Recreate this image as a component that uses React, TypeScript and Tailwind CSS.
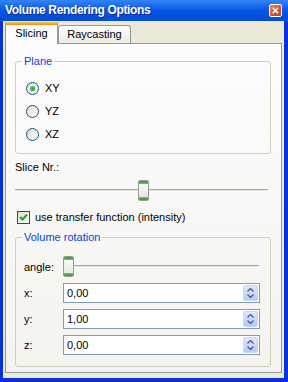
import React from "react";

function Thumb() {
  return (
    <div className="w-[11px] h-[21px] rounded-[2px] border border-[#9c9b95] bg-gradient-to-b from-[#ffffff] to-[#e2e1da] flex flex-col justify-between overflow-hidden">
      <div className="h-[3px] bg-gradient-to-b from-[#1f9e1f] to-[#5dd05d]" />
      <div className="h-[3px] bg-gradient-to-b from-[#5dd05d] to-[#1f9e1f]" />
    </div>
  );
}

function Slider({ pos, className }: { pos: number; className?: string }) {
  return (
    <div className={"relative h-[21px] flex items-center " + (className ?? "")}>
      <div className="w-full h-[3px] border-t border-[#a9a8a2] border-b border-b-white bg-[#e4e3dd]" />
      <div className="absolute top-0" style={{ left: pos }}>
        <Thumb />
      </div>
    </div>
  );
}

function Radio({ checked, label }: { checked?: boolean; label: string }) {
  return (
    <div className="h-[23px] flex items-center gap-[6px]">
      <div className="w-[13px] h-[13px] rounded-full border border-[#1c5180] bg-gradient-to-br from-[#dcdcd4] to-white flex items-center justify-center">
        {checked && <div className="w-[5px] h-[5px] rounded-full bg-gradient-to-br from-[#5ad25a] to-[#1d9a1d]" />}
      </div>
      <span>{label}</span>
    </div>
  );
}

function Spin({ value }: { value: string }) {
  return (
    <div className="flex-1 h-[20px] border border-[#7f9db9] bg-white flex items-center justify-between pl-[3px] pr-[1px]">
      <span>{value}</span>
      <div className="w-[15px] h-[16px] rounded-[2px] border border-[#c8d6f8] bg-gradient-to-b from-[#dde7fe] to-[#b6c9f7] flex flex-col items-center justify-center gap-[2px]">
        <svg width="7" height="4" viewBox="0 0 7 4">
          <path d="M0.5 3.5 L3.5 0.5 L6.5 3.5" fill="none" stroke="#4d6185" strokeWidth="1.4" />
        </svg>
        <svg width="7" height="4" viewBox="0 0 7 4">
          <path d="M0.5 0.5 L3.5 3.5 L6.5 0.5" fill="none" stroke="#4d6185" strokeWidth="1.4" />
        </svg>
      </div>
    </div>
  );
}

export default function App() {
  return (
    <div className="w-[288px] h-[382px] flex flex-col bg-[#0831d9] font-['Liberation_Sans',Arial,sans-serif] text-[11px] leading-[13px] text-black">
      {/* Title bar */}
      <div className="h-[21px] shrink-0 flex items-center justify-between pl-[5px] pr-[6px] bg-gradient-to-b from-[#3484f7] via-[#0655e4] to-[#024bd6]">
        <span className="text-white font-bold text-[12px] tracking-[-0.35px] [text-shadow:1px_1px_0_#0a2a8c]">Volume Rendering Options</span>
        <div className="w-[13px] h-[13px] rounded-[2px] border border-white bg-gradient-to-br from-[#e98a6c] via-[#d8552f] to-[#c23c16] flex items-center justify-center">
          <svg width="7" height="7" viewBox="0 0 7 7">
            <path d="M0.8 0.8 L6.2 6.2 M6.2 0.8 L0.8 6.2" stroke="white" strokeWidth="1.6" />
          </svg>
        </div>
      </div>

      {/* Body */}
      <div className="flex-1 flex flex-col bg-[#ece9d8] ml-[3px] mr-[4px] mb-[4px] pt-[1px] pl-[2px] pr-[2px] pb-[5px]">
        {/* Tabs */}
        <div className="h-[21px] flex items-end">
          <div className="relative z-10 w-[53px] h-[22px] -mb-[1px] flex flex-col border-x border-[#919b9c] bg-[#fcfcfe]">
            <div className="h-[3px] -mx-[1px] rounded-t-[3px] bg-gradient-to-b from-[#ffc83c] to-[#e68b2c]" />
            <div className="flex-1 flex items-center justify-center pb-[2px]">Slicing</div>
          </div>
          <div className="w-[73px] h-[18px] border border-b-0 border-[#919b9c] rounded-t-[3px] bg-gradient-to-b from-white to-[#ecebe5] flex items-center justify-center">
            Raycasting
          </div>
        </div>

        {/* Panel */}
        <div className="flex-1 border border-[#919b9c] bg-gradient-to-b from-[#fcfcfe] to-[#f4f3ee] pl-[9px] pr-[10px] flex flex-col">
          <fieldset className="mt-[11px] border border-[#d0d0bf] rounded-[3px] px-0">
            <legend className="ml-[6px] px-[2px] text-[#0046d5]">Plane</legend>
            <div className="pl-[10px] pt-[9px] pb-[7px]">
              <Radio checked label="XY" />
              <Radio label="YZ" />
              <Radio label="XZ" />
            </div>
          </fieldset>

          <div className="mt-[7px]">Slice Nr.:</div>
          <Slider pos={123} className="mt-[6px] mr-[3px]" />

          <div className="mt-[10px] h-[13px] flex items-center gap-[5px] pl-[2px]">
            <div className="w-[13px] h-[13px] border border-[#1c5180] bg-gradient-to-br from-[#dcdcd4] to-white flex items-center justify-center">
              <svg width="9" height="9" viewBox="0 0 9 9">
                <path d="M1 4 L3.5 6.5 L8 1.5" fill="none" stroke="#21a121" strokeWidth="2" />
              </svg>
            </div>
            <span>use transfer function (intensity)</span>
          </div>

          <fieldset className="mt-[7px] border border-[#d0d0bf] rounded-[3px] px-0">
            <legend className="ml-[6px] px-[2px] text-[#0046d5]">Volume rotation</legend>
            <div className="pl-[8px] pr-[10px] pt-[12px] pb-[11px] flex flex-col gap-[6px]">
              <div className="flex items-center">
                <span className="w-[39px] pt-[2px]">angle:</span>
                <Slider pos={0} className="flex-1 mr-[1px]" />
              </div>
              <div className="flex items-center">
                <span className="w-[39px]">x:</span>
                <Spin value="0,00" />
              </div>
              <div className="flex items-center">
                <span className="w-[39px]">y:</span>
                <Spin value="1,00" />
              </div>
              <div className="flex items-center">
                <span className="w-[39px]">z:</span>
                <Spin value="0,00" />
              </div>
            </div>
          </fieldset>
        </div>
      </div>
    </div>
  );
}
